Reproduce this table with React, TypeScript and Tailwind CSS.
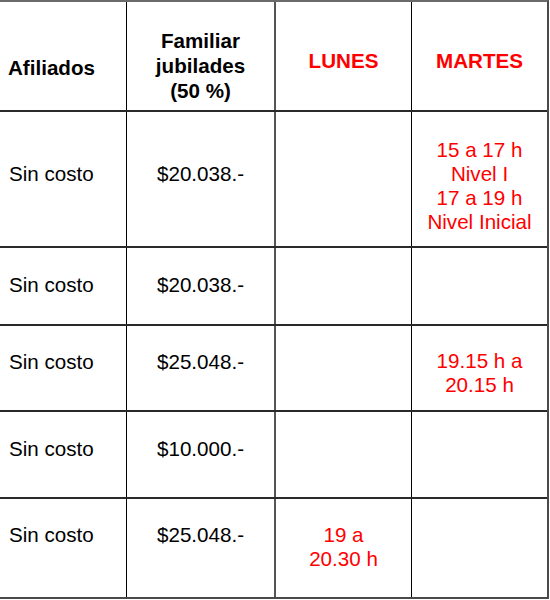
import React from "react";

type Row = {
  h: string;
  a: string;
  b: string;
  aPt: string;
  lunes?: string[];
  martes?: string[];
  redPt: string;
};

const rows: Row[] = [
  {
    h: "h-[136px]",
    a: "Sin costo",
    b: "$20.038.-",
    aPt: "pt-[50px]",
    martes: ["15 a 17 h", "Nivel I", "17 a 19 h", "Nivel Inicial"],
    redPt: "pt-[26px]",
  },
  { h: "h-[78px]", a: "Sin costo", b: "$20.038.-", aPt: "pt-[25px]", redPt: "pt-[25px]" },
  {
    h: "h-[86px]",
    a: "Sin costo",
    b: "$25.048.-",
    aPt: "pt-[24px]",
    martes: ["19.15 h a", "20.15 h"],
    redPt: "pt-[23px]",
  },
  { h: "h-[87px]", a: "Sin costo", b: "$10.000.-", aPt: "pt-[25px]", redPt: "pt-[25px]" },
  {
    h: "h-[100px]",
    a: "Sin costo",
    b: "$25.048.-",
    aPt: "pt-[24px]",
    lunes: ["19 a", "20.30 h"],
    redPt: "pt-[24px]",
  },
];

function Lines({ lines }: { lines?: string[] }) {
  if (!lines) return null;
  return (
    <>
      {lines.map((l, i) => (
        <div key={i}>{l}</div>
      ))}
    </>
  );
}

export default function App() {
  return (
    <div className="w-[550px] h-[600px] bg-white">
      <div
        className="w-[549px] border-t-2 border-r-2 border-t-[#6a6a6a] border-r-[#4a4a4a] text-[20.6px] leading-[24px] text-black"
        style={{ fontFamily: '"Liberation Sans", Arial, sans-serif' }}
      >
        {/* header */}
        <div className="flex h-[110px] border-b-2 border-b-[#2a2a2a]">
          <div className="w-[127px] shrink-0 border-r border-r-black pl-[8px] pt-[54px] font-bold">
            Afiliados
          </div>
          <div className="w-[149px] shrink-0 border-r-2 border-r-[#555] pt-[26px] text-center font-bold leading-[25px]">
            <div>Familiar</div>
            <div>jubilades</div>
            <div>(50 %)</div>
          </div>
          <div className="w-[136px] shrink-0 border-r border-r-black pt-[47px] text-center font-bold text-[#ff0000]">
            LUNES
          </div>
          <div className="w-[135px] shrink-0 pt-[47px] text-center font-bold text-[#ff0000]">
            MARTES
          </div>
        </div>
        {rows.map((r, i) => (
          <div
            key={i}
            className={`flex ${r.h} border-b-2 ${
              i === rows.length - 1 ? "border-b-[#4a4a4a]" : "border-b-[#2a2a2a]"
            }`}
          >
            <div className={`w-[127px] shrink-0 border-r border-r-black pl-[9px] ${r.aPt}`}>
              {r.a}
            </div>
            <div className={`w-[149px] shrink-0 border-r-2 border-r-[#555] text-center ${r.aPt}`}>
              {r.b}
            </div>
            <div
              className={`w-[136px] shrink-0 border-r border-r-black text-center text-[#ff0000] ${r.redPt}`}
            >
              <Lines lines={r.lunes} />
            </div>
            <div className={`w-[135px] shrink-0 text-center text-[#ff0000] ${r.redPt}`}>
              <Lines lines={r.martes} />
            </div>
          </div>
        ))}
      </div>
    </div>
  );
}
